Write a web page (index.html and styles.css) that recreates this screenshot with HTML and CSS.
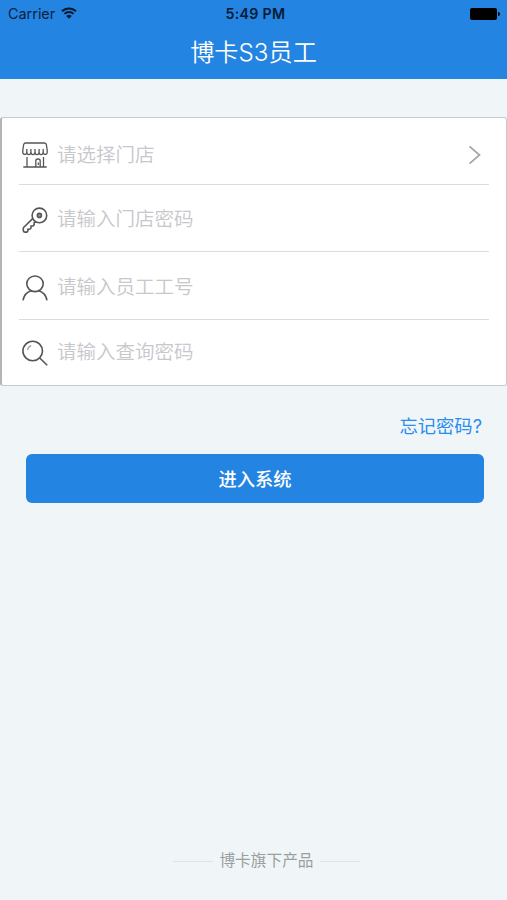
FILE: index.html
```html
<!DOCTYPE html>
<html lang="zh-CN">

<head>
    <meta charset="utf-8">
    <meta name="viewport" content="width=device-width, initial-scale=1.0">
    <title>博卡S3员工</title>
    <link rel="stylesheet" href="styles.css">
</head>

<body>
    <header class="header">
        <div class="status">
            <div class="carrier">
                <span>Carrier</span>
                <svg class="wifi" viewBox="0 0 16 12">
                    <path d="M1 4.3a10 10 0 0 1 14 0M3.4 6.9a6.6 6.6 0 0 1 9.2 0" />
                    <path class="dot" d="M8 11.8L5.2 9a4 4 0 0 1 5.6 0z" />
                </svg>
            </div>
            <div class="time">5:49 PM</div>
            <div class="battery">
                <span class="cell"></span>
                <span class="cap"></span>
            </div>
        </div>
        <h1>博卡S3员工</h1>
    </header>

    <section class="form">
        <div class="row store">
            <svg class="icon" viewBox="0 0 26 26">
                <path d="M3.6 1h18.8a2 2 0 0 1 1.9 1.4L25.2 8v2a2 2 0 0 1-4 .6 2 2 0 0 1-4.1 0 2 2 0 0 1-4.1 0 2 2 0 0 1-4.1 0 2 2 0 0 1-4.1 0 2 2 0 0 1-4-.6V8l.9-5.6A2 2 0 0 1 3.6 1z" />
                <path d="M4.8 7v4M8.9 7v4M13 7v4M17.1 7v4M21.2 7v4" />
                <path d="M5 15v10M21.5 15v10M1.3 25h23.4M13.8 25v-6a2 2 0 0 1 2-2h.4a2 2 0 0 1 2 2v6M16.3 20.5V23" />
            </svg>
            <span class="hint">请选择门店</span>
            <svg class="arrow" viewBox="0 0 13 20">
                <path d="M1.5 1.3L11.5 10 1.5 18.7" />
            </svg>
        </div>
        <div class="row key">
            <svg class="icon" viewBox="0 0 26 26">
                <circle cx="17.4" cy="8.4" r="7.3" />
                <circle class="hole" cx="17.4" cy="8.4" r="2" />
                <path d="M10.7 11.6L1.8 20.3a1.6 1.6 0 0 0-.5 1.1v2.2q0 1.5 1.5 1.5h2.1l1-1.1v-1.8h1.9l1.2-1.2v-2h2l1.2-1.4v-2l2.2-.6" />
            </svg>
            <span class="hint">请输入门店密码</span>
        </div>
        <div class="row worker">
            <svg class="icon" viewBox="0 0 26 26">
                <ellipse cx="13" cy="8.8" rx="8.2" ry="7.8" />
                <path d="M1 25.3c1-5.2 4-8.4 8.2-9.6M25 25.3c-1-5.2-4-8.4-8.2-9.6" />
            </svg>
            <span class="hint">请输入员工工号</span>
        </div>
        <div class="row last">
            <svg class="icon" viewBox="0 0 26 26">
                <circle cx="10.7" cy="11" r="9.8" />
                <path d="M17.7 18l7.5 7.3" />
                <path class="shine" d="M5.4 9.8q.7-3 3.8-4.2" />
            </svg>
            <span class="hint">请输入查询密码</span>
        </div>
    </section>

    <a class="forgot">忘记密码?</a>
    <button class="enter" type="button">进入系统</button>

    <footer class="footer">
        <span class="line"></span>
        <span>博卡旗下产品</span>
        <span class="line"></span>
    </footer>
</body>

</html>
```

FILE: styles.css
```css
* {
    box-sizing: border-box;
}

body {
    margin: 0;
    height: 900px;
    display: flex;
    flex-direction: column;
    background: #f0f6f7;
    font-family: "Liberation Sans", "Noto Sans CJK SC", sans-serif;
}

svg {
    fill: none;
    display: block;
}

.header {
    height: 79px;
    background: #2484e1;
    text-align: center;
}

.status {
    height: 27px;
    padding: 0 7px 0 8px;
    display: grid;
    grid-template-columns: 1fr auto 1fr;
    align-items: center;
    font-family: Inter, sans-serif;
    font-size: 14.4px;
    color: #0a2240;
}

.carrier {
    display: flex;
    align-items: center;
    gap: 6px;
}

.wifi {
    width: 16px;
    height: 12px;
    margin-bottom: 2px;
    stroke: #061a33;
    stroke-width: 2;
}

.wifi .dot {
    fill: #061a33;
    stroke: none;
}

.time {
    padding-left: 3px;
    font-size: 14.2px;
    font-weight: 600;
    letter-spacing: 0.3px;
    color: #061a33;
}

.battery {
    display: flex;
    justify-content: flex-end;
    align-items: center;
    gap: 1px;
}

.cell {
    width: 27px;
    height: 12px;
    border-radius: 2px;
    background: #000;
}

.cap {
    width: 2px;
    height: 4px;
    border-radius: 0 2px 2px 0;
    background: #000;
}

h1 {
    margin: 0;
    font-family: Inter, "Noto Sans CJK SC", sans-serif;
    font-size: 24.2px;
    font-weight: 350;
    line-height: 52px;
    color: #fff;
}

.form {
    margin-top: 38px;
    height: 269px;
    padding: 0 17px;
    background: #fff;
    border: 1px solid #c8cacb;
    border-left: 2px solid #b4b4b4;
    border-radius: 3px;
}

.row {
    height: 67px;
    padding: 0 8px 0 3px;
    display: flex;
    align-items: center;
    border-bottom: 1px solid #dcdcde;
}

.store {
    padding-top: 7px;
}

.key {
    padding-top: 1px;
}

.worker {
    height: 68px;
    padding-top: 2px;
}

.last {
    height: 65px;
    padding-bottom: 2px;
    border-bottom: none;
}

.icon {
    width: 26px;
    height: 26px;
    margin-top: 2px;
    stroke: #555;
    stroke-width: 1.6;
}

.store .icon {
    margin-top: 0;
    stroke-width: 1.3;
}

.hole {
    fill: #999;
}

.shine {
    stroke: #999;
    stroke-width: 1.2;
}

.hint {
    flex: 1;
    margin-left: 9px;
    font-size: 19.5px;
    font-weight: 350;
    line-height: 28px;
    color: #c7c7cc;
}

.arrow {
    width: 13px;
    height: 20px;
    stroke: #a5a5a5;
    stroke-width: 1.7;
}

.forgot {
    align-self: flex-end;
    margin: 26px 25px 0 0;
    font-family: Inter, "Noto Sans CJK SC", sans-serif;
    font-size: 18.3px;
    line-height: 28px;
    color: #2a8cf0;
}

.enter {
    height: 49px;
    margin: 14px 23px 0 26px;
    padding: 0 0 2px;
    border: none;
    border-radius: 6px;
    background: #2484e1;
    font-family: inherit;
    font-size: 18.3px;
    font-weight: 500;
    color: #fff;
}

.footer {
    margin-top: auto;
    padding: 0 0 28px 26px;
    display: flex;
    justify-content: center;
    align-items: center;
    gap: 6px;
    font-size: 15.7px;
    line-height: 22px;
    color: #9b9f9f;
}

.line {
    width: 40px;
    height: 1px;
    background: #dde2e2;
}
```
